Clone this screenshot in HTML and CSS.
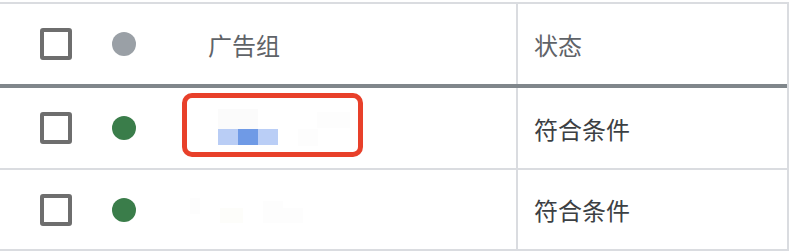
FILE: index.html
```html
<!DOCTYPE html>
<html lang="zh-CN">
<head>
<meta charset="utf-8">
<link rel="stylesheet" href="styles.css">
</head>
<body>
<div class="table">
  <div class="row head">
    <div class="cell main">
      <span class="checkbox"></span>
      <span class="dot grey"></span>
      <span class="title">广告组</span>
    </div>
    <div class="cell status">状态</div>
  </div>
  <div class="row item">
    <div class="cell main">
      <span class="checkbox"></span>
      <span class="dot green"></span>
      <div class="highlight">
        <svg class="blur" width="171" height="54" viewBox="0 0 171 54">
          <rect x="31" y="11" width="40" height="20" fill="#fbfbfb"/>
          <rect x="130" y="14" width="33" height="16" fill="#fdfdfd"/>
          <rect x="111" y="31" width="20" height="17" fill="#fdfdfd"/>
          <rect x="31" y="31" width="20" height="16" fill="#b9cdf5"/>
          <rect x="51" y="31" width="20" height="16" fill="#6f9ae6"/>
          <rect x="71" y="31" width="20" height="16" fill="#bacef6"/>
        </svg>
      </div>
    </div>
    <div class="cell status">符合条件</div>
  </div>
  <div class="row item last">
    <div class="cell main">
      <span class="checkbox"></span>
      <span class="dot green"></span>
      <svg class="blur2" width="120" height="30" viewBox="0 0 120 30">
        <rect x="3" y="0" width="10" height="16" fill="#fdfdfd"/>
        <rect x="33" y="10" width="23" height="15" fill="#fdfdfa"/>
        <rect x="76" y="3" width="20" height="22" fill="#fdfdfd"/>
        <rect x="96" y="10" width="20" height="15" fill="#fdfdfd"/>
      </svg>
    </div>
    <div class="cell status">符合条件</div>
  </div>
</div>
</body>
</html>
```
FILE: styles.css
```css
html, body {
  margin: 0;
  padding: 0;
  background: #ffffff;
}
body {
  padding-top: 2px;
  font-family: "Noto Sans CJK SC", "Noto Sans", sans-serif;
}
.table {
  width: 789px;
  border-top: 2px solid #dadce0;
  border-right: 2px solid #dadce0;
  border-bottom: 2px solid #dadce0;
  box-sizing: border-box;
}
.row {
  display: flex;
  height: 80px;
}
.row.head {
  border-bottom: 4px solid #80868b;
}
.row.item {
  border-bottom: 2px solid #dadce0;
}
.row.item.last {
  border-bottom: none;
  height: 79px;
}
.cell {
  display: flex;
  align-items: center;
}
.cell.main {
  width: 518px;
  box-sizing: border-box;
  border-right: 2px solid #dadce0;
  padding-left: 40px;
}
.cell.status {
  flex: 1;
  padding-left: 16px;
  font-size: 24px;
  color: #3c4043;
}
.head .cell.status {
  color: #5f6368;
}
.checkbox {
  width: 32px;
  height: 32px;
  box-sizing: border-box;
  border: 4px solid #6e6e6e;
  border-radius: 3px;
  flex: none;
}
.dot {
  width: 24px;
  height: 24px;
  border-radius: 50%;
  margin-left: 40px;
  flex: none;
}
.dot.grey { background: #9aa0a6; }
.dot.green { background: #3a7d4a; }
.title {
  margin-left: 72px;
  font-size: 24px;
  color: #5f6368;
}
.highlight {
  margin-left: 46px;
  width: 181px;
  height: 64px;
  box-sizing: border-box;
  border: 5px solid #e8402a;
  border-radius: 10px;
  align-self: flex-start;
  margin-top: 5px;
}
.blur {
  display: block;
}
.blur2 {
  display: block;
  margin-left: 51px;
  margin-top: 6px;
}
```
